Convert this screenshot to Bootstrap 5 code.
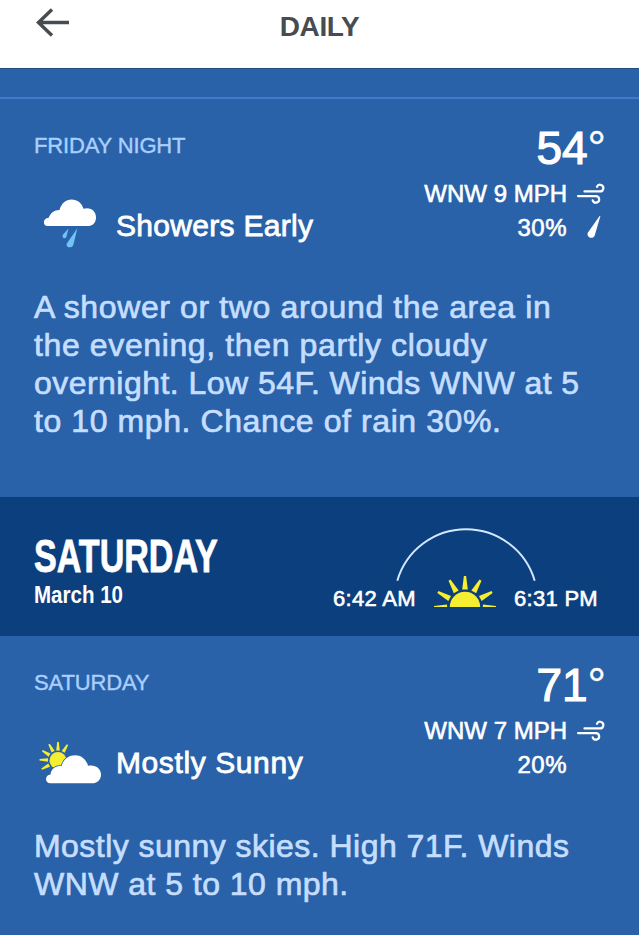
<!DOCTYPE html>
<html lang="en">
<head>
<meta charset="utf-8">
<meta name="viewport" content="width=device-width, initial-scale=1">
<title>Daily</title>
<link rel="stylesheet" href="https://cdn.jsdelivr.net/npm/bootstrap@5.3.0/dist/css/bootstrap.min.css">
<style>
body{font-family:"Liberation Sans",Arial,sans-serif;background:#2962a8;color:#fff;overflow:hidden}
svg{display:block;flex:none}
.topbar{height:69px;border-bottom:1px solid #234b7c;color:#464c50;padding-top:7px}
.topbar h1{font-size:28px;line-height:32px;letter-spacing:-.4px;margin:4px 0 0}
.side{width:80px}
.rule{height:30px;border-bottom:2px solid #4279c8}
.gutter{padding-left:34px;padding-right:34px}
.period{height:398px;padding-top:26px}
.period-last{height:299px}
.label{font-size:22px;line-height:24px;letter-spacing:-.15px;color:#a9cfff;margin-top:9px;-webkit-text-stroke:.4px}
.cond{height:60px;margin-top:37px;font-size:30px;-webkit-text-stroke:.8px}
.showers{letter-spacing:.3px}
.sunny{letter-spacing:.6px}
.temp{font-size:46px;line-height:46px;margin:0 -1px 6px 0;-webkit-text-stroke:1.2px}
.temp span{-webkit-text-stroke:.3px}
.fact{font-size:24px;line-height:34px;-webkit-text-stroke:.6px}
.fact svg{margin-top:-1px}
.pct{letter-spacing:.5px}
.no-drop{width:38px}
.story{font-size:32px;line-height:38px;color:#c5deff;margin:33px 0 0;white-space:nowrap;-webkit-text-stroke:.7px}
.period-last .story{margin-top:35px}
.t1{letter-spacing:.62px}
.t2{letter-spacing:.46px}
.t3{letter-spacing:.58px}
.dayband{height:139px;background:#0c3f7d;padding-top:32px}
.dayname{font-size:46px;line-height:46px;margin:4px 0 2px;transform:scaleX(.741);transform-origin:0 0;font-weight:700;-webkit-text-stroke:.8px}
.date{font-size:24px;line-height:28px;font-weight:700;transform:scaleX(.855);transform-origin:0 0}
.sunpath{width:265px;margin:-1px 7px 0 0}
.times{margin-top:-8px;font-size:22px;line-height:24px;letter-spacing:.3px;-webkit-text-stroke:.6px}
.times span{margin-top:12px}
</style>
</head>
<body>
<header class="topbar bg-white d-flex justify-content-between">
  <div class="side">
    <svg width="80" height="32" viewBox="0 7 80 32" fill="none" stroke="#464c50" stroke-width="3.4"><path d="M69 22.5H38M52 9.5L38.5 22.5L52 35.5"/></svg>
  </div>
  <h1 class="fw-bold">DAILY</h1>
  <div class="side"></div>
</header>
<div class="rule"></div>

<main>
<section class="period gutter">
  <div class="d-flex justify-content-between">
    <div>
      <div class="label">FRIDAY NIGHT</div>
      <div class="cond d-flex align-items-center">
        <svg width="82" height="60" viewBox="34 195.6 82 60">
          <path fill="#fff" d="M47.5 226.7C42.5 226.7 42.6 218.7 48.5 218.7C50.5 213.5 54 210.5 59.5 210.5C61.5 203.5 66 200 71.5 200C77.5 200 82 203.8 83.5 209.4C90.5 207.2 96 211.5 96 218C96 223.5 92.2 226.7 87.5 226.7Z"/>
          <path fill="#6fc3f5" d="M68.4 229L66.6 236.9C65.8 240.2 61.5 239 62.7 235.7ZM77.4 228.800L73.300 245.500C72 249.500 65.400 248.300 66.800 244Z"/>
        </svg>
        <span class="showers">Showers Early</span>
      </div>
    </div>
    <div class="d-flex flex-column align-items-end">
      <div class="temp">54<span>°</span></div>
      <div class="fact d-flex"><span>WNW 9 MPH</span>
        <svg width="38" height="34" viewBox="567 176.4 38 34" fill="none" stroke="#fff" stroke-width="2.2" stroke-linecap="round"><path d="M584.5 191.8H599.800A3.300 3.300 0 1 0 597 187.200M578 196.500H595.600A3.300 3.300 0 1 1 592.700 200.800"/></svg>
      </div>
      <div class="fact d-flex"><span class="pct">30%</span>
        <svg width="38" height="34" viewBox="567 210.6 38 34"><path fill="#fff" d="M600.4 216.6L594.8 235.8C593 240.7 586 238 587.8 233.4L599.600 216.600Z"/></svg>
      </div>
    </div>
  </div>
  <p class="story"><span class="t1">A shower or two around the area in</span><br><span class="t1">the evening, then partly cloudy</span><br><span class="t2">overnight. Low 54F. Winds WNW at 5</span><br><span class="t3">to 10 mph. Chance of rain 30%.</span></p>
</section>

<section class="dayband gutter d-flex justify-content-between">
  <div>
    <h2 class="dayname">SATURDAY</h2>
    <div class="date">March 10</div>
  </div>
  <div class="sunpath">
    <svg class="mx-auto" width="142" height="55" viewBox="395 528 142 55" fill="none" stroke="#d3e8ff" stroke-width="2"><path d="M397.3 580.7A71.6 71.6 0 0 1 534.7 580.7"/></svg>
    <div class="times d-flex justify-content-between">
      <span>6:42 AM</span>
      <svg width="62" height="35" viewBox="-31 -32 62 35" fill="#f5ee31">
        <path d="M-15.2 0A15.2 15.2 0 0 1 15.2 0Z"/>
        <path id="ray" d="M-2.8 -17.5L-1.1 -31H1.1L2.8 -17.5Z"/>
        <use href="#ray" transform="rotate(-30)"/><use href="#ray" transform="rotate(30)"/>
        <use href="#ray" transform="rotate(-61)"/><use href="#ray" transform="rotate(61)"/>
        <path d="M-31 0V-.9L-18 -2.4L-17.8 0ZM31 0V-.9L18 -2.4L17.8 0Z"/>
      </svg>
      <span>6:31 PM</span>
    </div>
  </div>
</section>

<section class="period period-last gutter">
  <div class="d-flex justify-content-between">
    <div>
      <div class="label">SATURDAY</div>
      <div class="cond d-flex align-items-center">
        <svg width="82" height="60" viewBox="34 195.6 82 60">
          <g transform="translate(58 224)" fill="#f5ee31">
            <circle r="8.5"/>
            <path id="beam" d="M-1.8 -10L-.8 -18.5H.8L1.8 -10Z"/>
            <use href="#beam" transform="rotate(31)"/><use href="#beam" transform="rotate(-29)"/>
            <use href="#beam" transform="rotate(-58)"/><use href="#beam" transform="rotate(-88)"/>
            <use href="#beam" transform="rotate(-118)"/>
          </g>
          <path fill="#fff" stroke="#2962a8" stroke-width="1.6" paint-order="stroke" d="M50.5 246.8C44.5 246.8 44.5 238.8 50.6 238.2C50.8 232.5 56 228.6 61.5 229.8C63.5 223 68.5 218.8 75 218.8C81.5 218.8 86.5 223 88 229.4C95 227.6 101 232 101 238C101 243.5 97 246.8 92 246.8Z"/>
        </svg>
        <span class="sunny">Mostly Sunny</span>
      </div>
    </div>
    <div class="d-flex flex-column align-items-end">
      <div class="temp">71<span>°</span></div>
      <div class="fact d-flex"><span>WNW 7 MPH</span>
        <svg width="38" height="34" viewBox="567 176.4 38 34" fill="none" stroke="#fff" stroke-width="2.2" stroke-linecap="round"><path d="M584.5 191.8H599.8A3.3 3.3 0 1 0 597 187.2M578 196.5H595.6A3.3 3.3 0 1 1 592.7 200.8"/></svg>
      </div>
      <div class="fact d-flex"><span class="pct">20%</span><span class="no-drop"></span></div>
    </div>
  </div>
  <p class="story"><span class="t2">Mostly sunny skies. High 71F. Winds</span><br><span class="t2">WNW at 5 to 10 mph.</span></p>
</section>
</main>
<script src="https://cdn.jsdelivr.net/npm/bootstrap@5.3.0/dist/js/bootstrap.bundle.min.js"></script>
</body>
</html>
